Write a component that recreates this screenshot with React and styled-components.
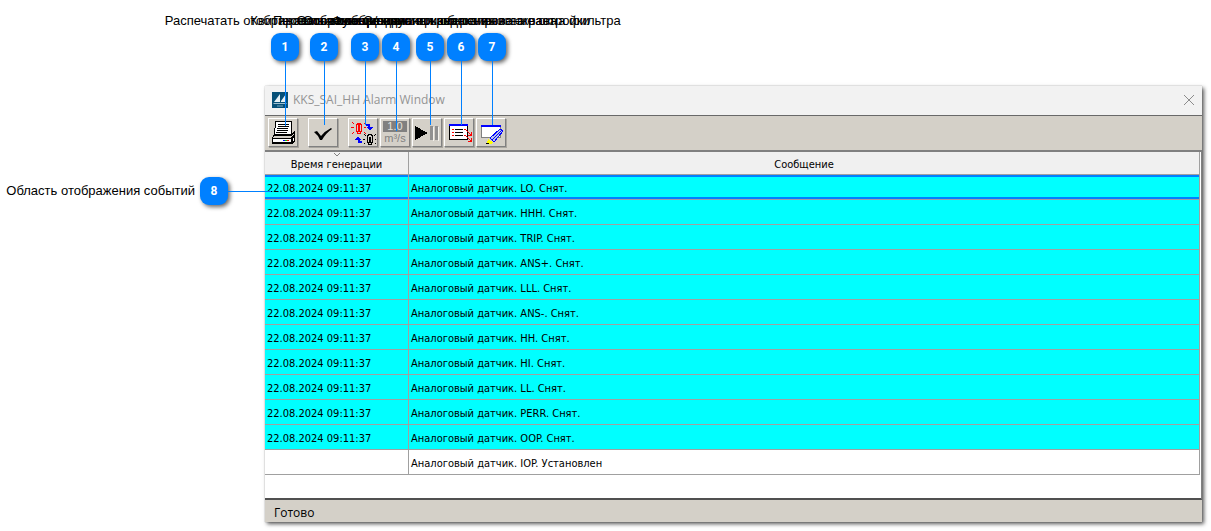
import React, { useState } from 'react';
import styled, { createGlobalStyle } from 'styled-components';

const GlobalStyle = createGlobalStyle`
  * { box-sizing: border-box; }
  body {
    margin: 0;
    background: #fff;
    color: #000;
    font-family: "Liberation Sans", Arial, sans-serif;
  }
`;

// Page layout
const Page = styled.div`
  display: grid;
  grid-template-columns: 265px minmax(0, 1fr);
  padding-right: 9px;
`;

const Callouts = styled.div`
  grid-column: 2;
  display: flex;
  align-items: flex-start;
  height: 86px;
  padding: 13px 0 0 6px;
`;

const Callout = styled.div`
  position: relative;
  display: flex;
  flex-direction: column;
  align-items: center;
  gap: 4px;
  width: 28px;
  margin-right: ${(p) => p.$gap}px;
`;

const CalloutText = styled.span`
  flex: none;
  font-size: 13px;
  line-height: 16px;
  white-space: nowrap;
`;

const Badge = styled.span`
  flex: none;
  width: 28px;
  height: 28px;
  border-radius: 9px;
  background: #0080ff;
  box-shadow: 2px 2px 4px rgba(0, 0, 0, 0.6);
  color: #fff;
  font: bold 12px/28px Roboto, "Liberation Sans", sans-serif;
  text-align: center;
`;

const Leader = styled.span`
  position: absolute;
  z-index: 2;
  top: 48px;
  left: 14px;
  width: 1px;
  height: ${(p) => p.$length}px;
  background: #0080ff;
`;

const SideCallout = styled.div`
  display: flex;
  align-items: center;
  align-self: start;
  justify-content: flex-end;
  margin-top: 91px;
`;

const SideBadge = styled(Badge)`
  margin-left: 5px;
`;

const SideLeader = styled.span`
  position: relative;
  z-index: 2;
  width: 43px;
  height: 1px;
  margin-right: -6px;
  background: #0080ff;
`;

// Window
const Window = styled.main`
  display: flex;
  flex-direction: column;
  margin-bottom: 9px;
  background: #fff;
  box-shadow: 0 0 1px rgba(0, 0, 0, 0.3), 2px 2px 4px rgba(0, 0, 0, 0.65);
`;

const TitleBar = styled.header`
  display: flex;
  align-items: center;
  gap: 5px;
  height: 30px;
  padding: 0 7px 2px;
  background: #f2f2f2;
  border-bottom: 1px solid #696969;
`;

const Title = styled.h1`
  flex: 1;
  margin: 0;
  color: #949494;
  font: 400 12px/16px "Open Sans", "Noto Sans", sans-serif;
`;

const CloseButton = styled.button`
  display: flex;
  padding: 0;
  border: 0;
  background: none;
`;

const Toolbar = styled.div`
  display: flex;
  gap: 2px;
  height: 36px;
  padding: 2px 3px;
  background: #d4d0c8;
  border-bottom: 2px solid #808080;
`;

const ToolButton = styled.button`
  display: flex;
  flex-direction: column;
  align-items: center;
  justify-content: center;
  width: 30px;
  height: 29px;
  margin-right: ${(p) => p.$gap || 0}px;
  padding: 0;
  border: 1px solid;
  border-color: #fff #808080 #808080 #fff;
  background: #d4d0c8;
  box-shadow: 1px 1px 0 #a9a69f;
`;

const Value = styled.span`
  width: 24px;
  background: #808080;
  color: #e4e1da;
  font: 11px/11px "Liberation Sans", sans-serif;
`;

const Unit = styled.span`
  color: #808080;
  font: 11px/12px "Liberation Sans", sans-serif;
`;

const Content = styled.div`
  min-height: 348px;
  padding-right: 1px;
  border-right: 1px solid #808080;
  border-bottom: 2px solid #505050;
`;

const Table = styled.table`
  width: 100%;
  table-layout: fixed;
  border-collapse: separate;
  border-spacing: 0;
  font: 11px/14px "DejaVu Sans Condensed", "DejaVu Sans", sans-serif;
`;

const HeadCell = styled.th`
  position: relative;
  width: ${(p) => p.$width || 'auto'};
  height: 23px;
  padding: 3px 2px 0;
  background: #f0f0f0;
  border-right: 1px solid #a0a0a0;
  border-bottom: 1px solid #a0a0a0;
  font-weight: 400;
`;

const SortMark = styled.svg`
  position: absolute;
  top: 1px;
  left: 68px;
`;

const Row = styled.tr`
  background: ${(p) => (p.$active ? '#00ffff' : '#fff')};
`;

const Cell = styled.td`
  height: 25px;
  padding: 3px 2px 0;
  border-right: 1px solid #a0a0a0;
  border-bottom: 1px solid #a0a0a0;
  white-space: nowrap;
  ${(p) => p.$selected && 'box-shadow: inset 0 2px #0080ff, inset 0 -2px #0080ff;'}
`;

const StatusBar = styled.footer`
  height: 22px;
  padding: 0 9px;
  background: #d4d0c8;
  font: 12px/26px "Open Sans", "Noto Sans", sans-serif;
`;

const callouts = [
  { text: 'Распечатать отображаемые сообщения', gap: 11, length: 65 },
  { text: 'Квитировать сообщения', gap: 13, length: 64 },
  { text: 'Переключение режима показа', gap: 3, length: 64 },
  { text: 'Отображение единиц измерения', gap: 6, length: 70 },
  { text: 'Остановить/запустить обновление экрана', gap: 3, length: 64 },
  { text: 'Функциональная кнопка вызова настройки', gap: 3, length: 64 },
  { text: 'Создание и редактирование окна фильтра', gap: 0, length: 64 },
];

const time = '22.08.2024 09:11:37';
const signals = ['LO', 'HHH', 'TRIP', 'ANS+', 'LLL', 'ANS-', 'HH', 'HI', 'LL', 'PERR', 'OOP'];
const events = [
  ...signals.map((s) => ({ time, message: `Аналоговый датчик. ${s}. Снят.`, active: true })),
  { time: '', message: 'Аналоговый датчик. IOP. Установлен', active: false },
];

const Icon = ({ children }) => (
  <svg width="28" height="27" viewBox="1 1 28 27" fill="none" shapeRendering="crispEdges" aria-hidden="true">
    {children}
  </svg>
);

const PrintIcon = () => (
  <Icon>
    <path d="M8 3h16l-1 14H6z" fill="#fff" stroke="#000" />
    <path d="M10 6.5h11M10 8.5h11M9 10.5h11M9 12.5h11M8 14.5h11" stroke="#000" />
    <path d="M4 19l3-3h16l4-3v10l-3 3H4z" fill="#000" />
    <path d="M6 18h17l3-3v1l-3 4H5z" fill="#d4d0c8" />
    <path d="M5 21h18v3H5z" fill="#fff" />
    <path d="M25 20l1-1v3l-1 1z" fill="#fff" />
    <path d="M15 22.5h2" stroke="#00f" />
    <path d="M17 22.5h2" stroke="#0c0" />
    <path d="M19 22.5h2" stroke="#f00" />
  </Icon>
);

const CheckIcon = () => (
  <Icon>
    <path d="M6 14l3-1 4 5q4-5 10-8l1 1q-6 4-10 11h-2q-2-5-6-8z" fill="#000" shapeRendering="auto" />
  </Icon>
);

const LampIcon = () => (
  <Icon>
    <path d="M8 6h1V5h4v1h1v8h-1v2H9v-2H8z" fill="#f00" />
    <path d="M9 7h1v6H9zM12 7h1v6h-1zM10 14h2v1h-2z" fill="#d4d0c8" />
    <path d="M4 4h1v1H4zM5 5h1v1H5zM3 9h3v1H3zM5 14h1v1H5zM4 15h1v1H4zM17 4h1v1h-1zM16 5h1v1h-1zM16 9h2v1h-2zM16 14h1v1h-1zM17 15h1v1h-1z" fill="#f00" />
    <path d="M18 6h4v3h3v1h-1v1h-1v1h-2v-1h-1v-1h-1V9h1V8h-2z" fill="#00f" />
    <path d="M14 25h-4v-3H7v-1h1v-1h1v-1h2v1h1v1h1v1h-1v1h2z" fill="#00f" />
    <path d="M19 17h1v-1h4v1h1v8h-1v2h-4v-2h-1z" fill="#000" />
    <path d="M20 18h1v6h-1zM23 18h1v6h-1zM21 25h2v1h-2zM21 17h2v2h-2z" fill="#d4d0c8" />
    <path d="M16 16h1v1h-1zM17 17h1v1h-1zM15 21h2v1h-2zM16 25h1v1h-1zM27 16h1v1h-1zM26 17h1v1h-1zM27 21h1v1h-1zM27 25h1v1h-1z" fill="#000" />
  </Icon>
);

const PauseIcon = () => (
  <Icon>
    <path d="M3 8l13 7-13 7z" fill="#000" />
    <path d="M18 8h3v14h-3zM23 8h3v14h-3z" fill="#909090" />
    <path d="M21 9h1v14h-1zM26 9h1v14h-1z" fill="#f4f2ee" />
  </Icon>
);

const ListIcon = () => (
  <Icon>
    <path d="M5.500 6.500h18v15h-18z" fill="#fff" stroke="#000" />
    <path d="M5 6h19v2H5z" fill="#00f" />
    <path d="M8 11h2v1H8zM8 14h2v1H8zM8 17h2v1H8z" fill="#f00" />
    <path d="M11 11h8v1h-8zM11 14h8v1h-8zM11 17h8v1h-8z" fill="#000" />
    <path d="M20 11h2v1h-2zM22 12h1v1h-1zM23 13h1v1h-1zM24 14h1v1h-1zM25 15h1v1h-1zM27 14h1v4h-4v-1h2v-1h1z" fill="#f00" />
    <path d="M20 17h2v1h-2zM22 18h1v1h-1zM23 19h1v1h-1zM24 20h1v1h-1zM25 21h1v1h-1zM27 20h1v4h-4v-1h2v-1h1z" fill="#f00" />
  </Icon>
);

const EditIcon = () => (
  <Icon>
    <path d="M5.500 8.500h19v11h-19z" fill="#fff" stroke="#808080" />
    <path d="M5 7h20v2H5z" fill="#00f" />
    <path d="M14 20l10-9 3 2-9 11z" fill="#b8c4e8" stroke="#00f" />
    <path d="M16 22l10-10" stroke="#00f" />
    <path d="M12 21l5 3-2 2h-4z" fill="#ff0" />
    <path d="M10 25h3v1h-3z" fill="#000" />
  </Icon>
);

const AppLogo = () => (
  <svg width="16" height="16" viewBox="0 0 16 16" aria-hidden="true">
    <path d="M0 0h16v16H0z" fill="#075078" />
    <path d="M8 2v8H2zM9 9l5-7v8H9z" fill="#e8f1f5" />
    <path d="M1 11h14l-1 1H2z" fill="#9fc0d0" />
    <path d="M5 14h6" stroke="#7ba7bd" />
  </svg>
);

const tools = [
  { label: 'Распечатать', icon: <PrintIcon />, gap: 8 },
  { label: 'Квитировать', icon: <CheckIcon />, gap: 8 },
  { label: 'Переключить', icon: <LampIcon /> },
  { label: 'Единицы измерения', icon: <><Value>1.0</Value><Unit>m³/s</Unit></> },
  { label: 'Остановить', icon: <PauseIcon /> },
  { label: 'Настройки', icon: <ListIcon /> },
  { label: 'Фильтр', icon: <EditIcon /> },
];

const App = () => {
  const [selected, setSelected] = useState(0);

  return (
    <>
      <GlobalStyle />
      <Page>
        <Callouts>
          {callouts.map((c, i) => (
            <Callout key={c.text} $gap={c.gap}>
              <CalloutText>{c.text}</CalloutText>
              <Badge>{i + 1}</Badge>
              <Leader $length={c.length} />
            </Callout>
          ))}
        </Callouts>

        <SideCallout>
          <CalloutText>Область отображения событий</CalloutText>
          <SideBadge>8</SideBadge>
          <SideLeader />
        </SideCallout>

        <Window>
          <TitleBar>
            <AppLogo />
            <Title>KKS_SAI_HH Alarm Window</Title>
            <CloseButton type="button" aria-label="Закрыть">
              <svg width="12" height="12" viewBox="0 0 12 12" stroke="#8c8c8c">
                <path d="M1 1l10 10M11 1L1 11" />
              </svg>
            </CloseButton>
          </TitleBar>
          <Toolbar>
            {tools.map((t) => (
              <ToolButton key={t.label} type="button" aria-label={t.label} $gap={t.gap}>
                {t.icon}
              </ToolButton>
            ))}
          </Toolbar>
          <Content>
            <Table>
              <thead>
                <tr>
                  <HeadCell $width="144px">
                    <SortMark width="8" height="5" viewBox="0 0 8 5" fill="none" stroke="#808080">
                      <path d="M1 0l3 3 3-3" />
                    </SortMark>
                    Время генерации
                  </HeadCell>
                  <HeadCell>Сообщение</HeadCell>
                </tr>
              </thead>
              <tbody>
                {events.map((e, i) => (
                  <Row key={e.message} $active={e.active} onClick={() => setSelected(i)}>
                    <Cell $selected={i === selected}>{e.time}</Cell>
                    <Cell $selected={i === selected}>{e.message}</Cell>
                  </Row>
                ))}
              </tbody>
            </Table>
          </Content>
          <StatusBar>Готово</StatusBar>
        </Window>
      </Page>
    </>
  );
};

export default App;
